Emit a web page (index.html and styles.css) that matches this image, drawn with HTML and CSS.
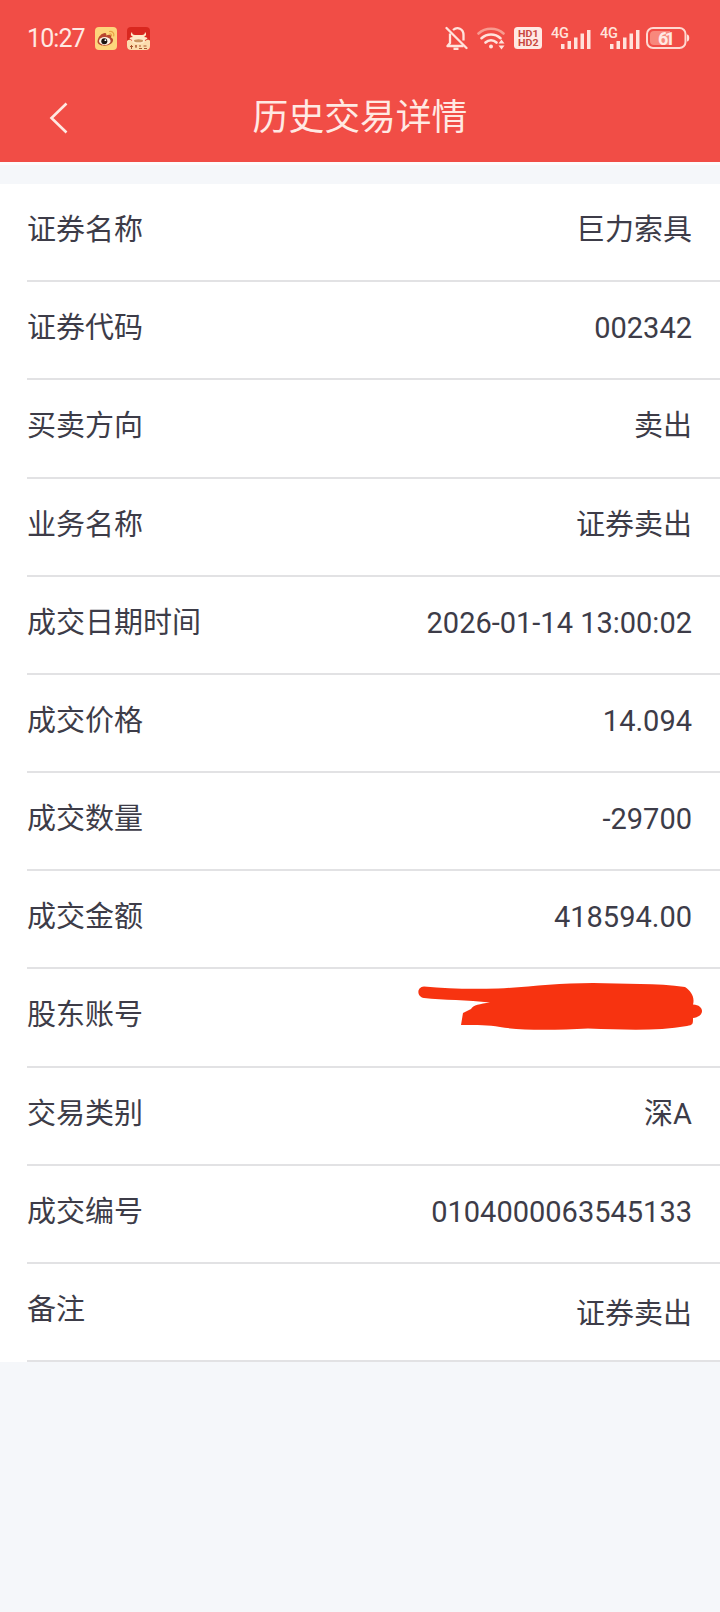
FILE: index.html
```html
<!DOCTYPE html>
<html lang="zh-CN">
<head>
    <meta charset="UTF-8" />
    <title>历史交易详情</title>
    <link rel="stylesheet" href="styles.css">
</head>
<body>
    <header class="header">
    <!-- status bar -->
    <div class="status-bar">
        <span class="clock">10:27</span>
        <svg class="app-icon" width="22" height="23" viewBox="0 0 22 23">
            <rect width="22" height="23" rx="4" fill="#fdd57c"/>
            <path d="M2.5 14.5C3 9.500 7 6 10 6c1.500 0 1.500 1.500 1.200 2.500C14 7 17 7.500 16 10.500c3 1 2.500 4.500 0 6.200C11.500 20 2.500 19 2.500 14.500z" fill="#b9472f"/>
            <ellipse cx="9.800" cy="14" rx="5.800" ry="4" fill="#fff4e4"/>
            <circle cx="9.300" cy="14.200" r="3" fill="#1c1512"/>
            <circle cx="10.400" cy="13.200" r=".9" fill="#fff"/>
            <path d="M14.500 4.500c3-.5 5 2 4.200 4.500M14.800 7c1.200-.2 2 .6 1.700 1.800" fill="none" stroke="#e9a044" stroke-width="1.200" stroke-linecap="round"/>
        </svg>
        <svg class="app-icon app-icon-ox" width="23" height="23" viewBox="0 0 23 23">
            <rect width="23" height="23" rx="4" fill="#d9271f"/>
            <path d="M0 14c2-2 4-1 5 0h13c2-1 4-2 5 0v5a4 4 0 0 1-4 4H4a4 4 0 0 1-4-4z" fill="#fbdcae"/>
            <path d="M5 5c0 2 1 3 3 3h7c2 0 3-1 3-3 2 2 1 4-1 5 3 0 4 1 3 2l-2 1c0 3-3 4-6.500 4S5 16 5 13l-2-1c-1-1 0-2 3-2-2-1-3-3-1-5z" fill="#ffe9c7"/>
            <ellipse cx="11.500" cy="13.800" rx="4.500" ry="1.500" fill="#c99460"/>
            <path d="M3 19.500h3M4.500 18v4M8 19h2M9 18v3M12 19h2M12 21.500h3M16.500 19h3M17 21.500h3" stroke="#a8552f" stroke-width="1"/>
        </svg>

        <div class="status-right">
            <svg width="23" height="25" viewBox="0 0 23 25" fill="none" stroke="#ffe3dc" stroke-width="2.300">
                <path d="M5 7.500V17L2.500 20h16M8 4c4.500-4 10.500-1 10.500 5v5.500" stroke-linejoin="round"/>
                <path d="M1.500 2l20 20" stroke-linecap="round"/>
                <path d="M8.500 22.800h5" stroke-width="2.400"/>
            </svg>
            <svg class="wifi" width="29" height="23" viewBox="0 0 29 23" fill="none" stroke="#ffe3dc" stroke-width="2.600" stroke-linecap="round">
                <path d="M1.500 6.500C8.500.2 19.500.2 26.500 6.500" stroke="#f89a8f"/>
                <path d="M4.500 11.200c5.500-5 13.500-5 19 0M8.500 15.500c3.200-3 7.800-3 11 0"/>
                <circle cx="14" cy="19.500" r="2" fill="#ffe3dc" stroke="none"/>
                <path d="M21.500 16.500l3-4 3 4zM21.500 18.500l3 4 3-4z" fill="#ffe3dc" stroke="none"/>
            </svg>
            <svg class="hd" width="28" height="22" viewBox="0 0 28 22">
                <rect width="28" height="22" rx="3.500" fill="#ffe9e3"/>
                <g class="hd-text">
                    <text x="4" y="9.800" textLength="20.500" lengthAdjust="spacingAndGlyphs">HD1</text>
                    <text x="4" y="19.300" textLength="20.500" lengthAdjust="spacingAndGlyphs">HD2</text>
                </g>
            </svg>
            <svg class="signal" width="40" height="24" viewBox="0 0 40 24" fill="#ffe3dc">
                <text x="0" y="12" textLength="18">4G</text>
                <path d="M10 18h3.500v5H10zM16.500 15H20v8h-3.500zM23 11.500h3.500V23H23zM29.500 7.500H33V23h-3.500zM36 4h3.500v19H36z"/>
            </svg>
            <svg class="signal" width="40" height="24" viewBox="0 0 40 24" fill="#ffe3dc">
                <text x="0" y="12" textLength="18">4G</text>
                <path d="M10 18h3.500v5H10zM16.500 15H20v8h-3.500zM23 11.500h3.500V23H23zM29.500 7.500H33V23h-3.500zM36 4h3.500v19H36z"/>
            </svg>
            <svg class="battery" width="44" height="22" viewBox="0 0 44 22">
                <rect x="1" y="1" width="38.500" height="20" rx="6" fill="none" stroke="#ffd9d1" stroke-width="2"/>
                <path d="M8 4h16v14H8a4 4 0 0 1-4-4V8a4 4 0 0 1 4-4z" fill="#f8887c"/>
                <path d="M41 7.500c3 0 3 7 0 7z" fill="#ffe3dc"/>
                <text x="20.500" y="17.500" text-anchor="middle" textLength="17">61</text>
            </svg>
        </div>
    </div>

    <!-- title bar -->
    <div class="title-bar">
        <svg class="back" width="20" height="32" viewBox="0 0 20 32">
            <path d="M17.500 1.500L2.500 16l15 14.500" fill="none" stroke="#ffe9e3" stroke-width="2.600"/>
        </svg>
        <h1 class="title">历史交易详情</h1>
    </div>
    </header>

    <!-- trade details -->
    <main class="list">
        <div class="row"><span>证券名称</span><span>巨力索具</span></div>
        <div class="row"><span>证券代码</span><span>002342</span></div>
        <div class="row"><span>买卖方向</span><span>卖出</span></div>
        <div class="row"><span>业务名称</span><span>证券卖出</span></div>
        <div class="row"><span>成交日期时间</span><span>2026-01-14 13:00:02</span></div>
        <div class="row"><span>成交价格</span><span>14.094</span></div>
        <div class="row"><span>成交数量</span><span>-29700</span></div>
        <div class="row"><span>成交金额</span><span>418594.00</span></div>
        <div class="row">
            <span>股东账号</span>
            <svg class="scribble" width="284" height="48" viewBox="0 0 284 48">
                <path d="M6 3.500C30 6 55 6 80 5.500C110 4 140 0 175 0C205 1 240 0 267 4C273 8 277 14 275 21.500C287 22 287 34 275 35C275 41 275 42 269 43C240 48 210 47 170 45.500C140 47 105 48 82 44C70 42 60 42 43 42L45 30L53 26C55 22 62 21 72 19.500C50 17 25 17 6 15C-1.500 14 -1.500 4 6 3.500z" fill="#f73310"/>
            </svg>
        </div>
        <div class="row"><span>交易类别</span><span>深A</span></div>
        <div class="row"><span>成交编号</span><span>0104000063545133</span></div>
        <div class="row"><span>备注</span><span class="remark">证券卖出</span></div>
    </main>
</body>
</html>
```
FILE: styles.css
```css
body {
  margin: 0;
  font-family: Roboto, "Noto Sans CJK SC", sans-serif;
  background-color: #f5f7fa;
  color: #3d3c48;
}

.header {
  height: 162px;
  background-color: #f14d46;
  border-bottom: 3px solid #fdfbfc;
  color: #ffe9e3;
}

/* status bar */
.status-bar {
  display: flex;
  align-items: center;
  height: 76px;
  padding: 0 30px 0 27px;
}

.clock {
  width: 68px;
  font-size: 25px;
  letter-spacing: -0.9px;
}

.app-icon-ox {
  margin-left: 10px;
}

.status-right {
  display: flex;
  align-items: center;
  margin-left: auto;
}

.wifi {
  margin-left: 9px;
}

.hd {
  margin-left: 8px;
}

.hd-text {
  font-size: 9.3px;
  font-weight: bold;
  fill: #c9483f;
}

.signal {
  margin-left: 9px;
  font-size: 14.5px;
  font-weight: 500;
}

.battery {
  margin-left: 6px;
  font-size: 18px;
  font-weight: bold;
  fill: #ffe9e3;
}

/* title bar */
.title-bar {
  display: grid;
  grid-template-columns: 100px 1fr 100px;
  align-items: center;
  height: 84px;
}

.back {
  margin-left: 49px;
}

.title {
  margin: 0;
  font-size: 35.8px;
  font-weight: normal;
  line-height: 84px;
  text-align: center;
}

/* details list */
.list {
  margin-top: 19px;
  padding-left: 27px;
  background-color: #fff;
}

.row {
  display: flex;
  justify-content: space-between;
  box-sizing: border-box;
  height: 98.18px;
  padding-right: 28px;
  border-bottom: 2px solid #e2e2e4;
  font-size: 29px;
  line-height: 92px;
}

.remark {
  padding-top: 4px;
}

.scribble {
  margin: 14px -10px 0 0;
  margin-right: -10px;
}
```
